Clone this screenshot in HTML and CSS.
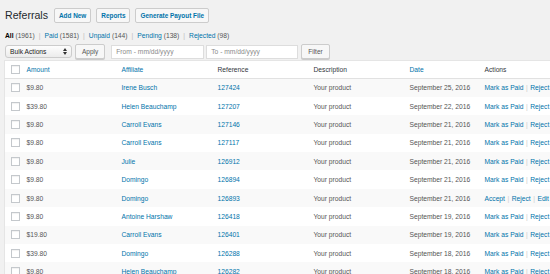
FILE: index.html
```html
<!DOCTYPE html>
<html>
<head>
<meta charset="utf-8">
<link rel="stylesheet" href="styles.css">
</head>
<body>
<div class="wrap">
  <div class="head">
    <h1 class="title">Referrals</h1>
    <a class="btn-title">Add New</a>
    <a class="btn-title">Reports</a>
    <a class="btn-title">Generate Payout File</a>
  </div>
  <ul class="subsub">
    <li><b>All</b> <span class="cnt">(1961)</span><span class="sep">|</span></li>
    <li><a>Paid</a> <span class="cnt">(1581)</span><span class="sep">|</span></li>
    <li><a>Unpaid</a> <span class="cnt">(144)</span><span class="sep">|</span></li>
    <li><a>Pending</a> <span class="cnt">(138)</span><span class="sep">|</span></li>
    <li><a>Rejected</a> <span class="cnt">(98)</span></li>
  </ul>
  <div class="tablenav">
    <div class="select">Bulk Actions
      <svg class="arrows" width="4" height="7" viewBox="0 0 4 7"><path d="M0 3 L2 0 L4 3 Z M0 4 L2 7 L4 4 Z" fill="#333"/></svg>
    </div>
    <span class="btn">Apply</span>
    <span class="input from">From - mm/dd/yyyy</span>
    <span class="input to">To - mm/dd/yyyy</span>
    <span class="btn">Filter</span>
  </div>
  <div class="tablebox">
    <table class="list">
      <colgroup>
        <col class="c-cb"><col class="c-amt"><col class="c-aff"><col class="c-ref"><col class="c-desc"><col class="c-date"><col class="c-act">
      </colgroup>
      <thead>
        <tr>
          <th><span class="cb"></span></th>
          <th><a>Amount</a></th>
          <th><a>Affiliate</a></th>
          <th>Reference</th>
          <th>Description</th>
          <th><a>Date</a></th>
          <th>Actions</th>
        </tr>
      </thead>
      <tbody>
        <tr><td><span class="cb"></span></td><td>$9.80</td><td><a>Irene Busch</a></td><td><a>127424</a></td><td>Your product</td><td>September 25, 2016</td><td><a>Mark as Paid</a><span class="s">|</span><a>Reject</a></td></tr>
        <tr><td><span class="cb"></span></td><td>$39.80</td><td><a>Helen Beauchamp</a></td><td><a>127207</a></td><td>Your product</td><td>September 22, 2016</td><td><a>Mark as Paid</a><span class="s">|</span><a>Reject</a></td></tr>
        <tr><td><span class="cb"></span></td><td>$9.80</td><td><a>Carroll Evans</a></td><td><a>127146</a></td><td>Your product</td><td>September 21, 2016</td><td><a>Mark as Paid</a><span class="s">|</span><a>Reject</a></td></tr>
        <tr><td><span class="cb"></span></td><td>$9.80</td><td><a>Carroll Evans</a></td><td><a>127117</a></td><td>Your product</td><td>September 21, 2016</td><td><a>Mark as Paid</a><span class="s">|</span><a>Reject</a></td></tr>
        <tr><td><span class="cb"></span></td><td>$9.80</td><td><a>Julie</a></td><td><a>126912</a></td><td>Your product</td><td>September 21, 2016</td><td><a>Mark as Paid</a><span class="s">|</span><a>Reject</a></td></tr>
        <tr><td><span class="cb"></span></td><td>$9.80</td><td><a>Domingo</a></td><td><a>126894</a></td><td>Your product</td><td>September 21, 2016</td><td><a>Mark as Paid</a><span class="s">|</span><a>Reject</a></td></tr>
        <tr><td><span class="cb"></span></td><td>$9.80</td><td><a>Domingo</a></td><td><a>126893</a></td><td>Your product</td><td>September 21, 2016</td><td><a>Accept</a><span class="s">|</span><a>Reject</a><span class="s">|</span><a>Edit</a></td></tr>
        <tr><td><span class="cb"></span></td><td>$9.80</td><td><a>Antoine Harshaw</a></td><td><a>126418</a></td><td>Your product</td><td>September 19, 2016</td><td><a>Mark as Paid</a><span class="s">|</span><a>Reject</a></td></tr>
        <tr><td><span class="cb"></span></td><td>$19.80</td><td><a>Carroll Evans</a></td><td><a>126401</a></td><td>Your product</td><td>September 19, 2016</td><td><a>Mark as Paid</a><span class="s">|</span><a>Reject</a></td></tr>
        <tr><td><span class="cb"></span></td><td>$39.80</td><td><a>Domingo</a></td><td><a>126288</a></td><td>Your product</td><td>September 18, 2016</td><td><a>Mark as Paid</a><span class="s">|</span><a>Reject</a></td></tr>
        <tr><td><span class="cb"></span></td><td>$9.80</td><td><a>Helen Beauchamp</a></td><td><a>126282</a></td><td>Your product</td><td>September 18, 2016</td><td><a>Mark as Paid</a><span class="s">|</span><a>Reject</a></td></tr>
      </tbody>
    </table>
  </div>
</div>
</body>
</html>
```

FILE: styles.css
```css
html, body {
  margin: 0;
  padding: 0;
  background: #f1f1f1;
  overflow: hidden;
  width: 550px;
  height: 274px;
}
body {
  font-family: "Liberation Sans", Arial, sans-serif;
  font-size: 6.7px;
  color: #444;
}
a { color: #0073aa; text-decoration: none; }
.wrap { padding: 0 0 0 4px; }
.head {
  display: flex;
  align-items: center;
  padding: 8px 0 0 1px;
  height: 15px;
}
.title {
  margin: 0 6px 0 0;
  font-size: 10.6px;
  font-weight: 400;
  color: #23282d;
  line-height: 15px;
}
.btn-title {
  display: inline-flex;
  align-items: center;
  height: 13px;
  padding: 0 4px;
  margin-right: 5px;
  border: 1px solid #ccc;
  border-radius: 2px;
  background: #f7f7f7;
  font-size: 6.4px;
  font-weight: 700;
  color: #0073aa;
}
.subsub {
  list-style: none;
  margin: 0;
  padding: 0 0 0 1px;
  display: flex;
  height: 9px;
  margin-top: 8px;
  line-height: 9px;
  font-size: 6.7px;
  color: #666;
}
.subsub b { color: #000; font-weight: 700; }
.sep { color: #bbb; padding: 0 4px; }
.cnt { color: #555; }
.tablenav {
  display: flex;
  align-items: center;
  height: 15px;
  margin-top: 4px;
  padding-left: 1px;
}
.select {
  display: flex;
  align-items: center;
  justify-content: space-between;
  box-sizing: border-box;
  width: 67px;
  height: 13px;
  padding: 0 4px;
  border: 1px solid #ccc;
  border-radius: 3px;
  background: linear-gradient(#fdfdfd, #ececec);
  color: #222;
  font-size: 6.7px;
}
.btn {
  display: inline-flex;
  align-items: center;
  justify-content: center;
  box-sizing: border-box;
  height: 15px;
  padding: 0 6px;
  margin-left: 3px;
  border: 1px solid #ccc;
  border-radius: 2px;
  background: #f7f7f7;
  box-shadow: 0 1px 0 #ccc;
  color: #555;
  font-size: 6.5px;
}
.input {
  display: inline-flex;
  align-items: center;
  box-sizing: border-box;
  height: 14px;
  padding: 0 4px;
  border: 1px solid #ddd;
  background: #fff;
  color: #8a8a8a;
  font-size: 6.7px;
}
.from { width: 93px; margin-left: 6px; }
.to { width: 92px; margin-left: 2px; }
.tablebox {
  margin-top: 1px;
  width: 546px;
  overflow: hidden;
}
.list {
  border-collapse: collapse;
  table-layout: fixed;
  width: 600px;
  background: #fff;
  border: 1px solid #e5e5e5;
}
.c-cb { width: 18px; }
.c-amt { width: 95px; }
.c-aff { width: 96px; }
.c-ref { width: 96px; }
.c-desc { width: 96px; }
.c-date { width: 75px; }
.c-act { width: 124px; }
.list th, .list td {
  height: 18.4px;
  padding: 0 0 0 4px;
  text-align: left;
  white-space: nowrap;
  vertical-align: middle;
  box-sizing: border-box;
}
.list th {
  font-weight: 400;
  color: #32373c;
  border-bottom: 1px solid #e1e1e1;
  height: 18px;
}
.list th:first-child, .list td:first-child { padding-left: 6px; }
.list td { color: #555; }
.list tbody tr:nth-child(odd) td { background: #f9f9f9; }
.cb {
  display: block;
  width: 7px;
  height: 7px;
  border: 1px solid #c4c8cc;
  background: #fff;
  box-shadow: inset 0 1px 1px rgba(0,0,0,0.06);
}
.s { color: #ccc; padding: 0 2.5px; }
```
